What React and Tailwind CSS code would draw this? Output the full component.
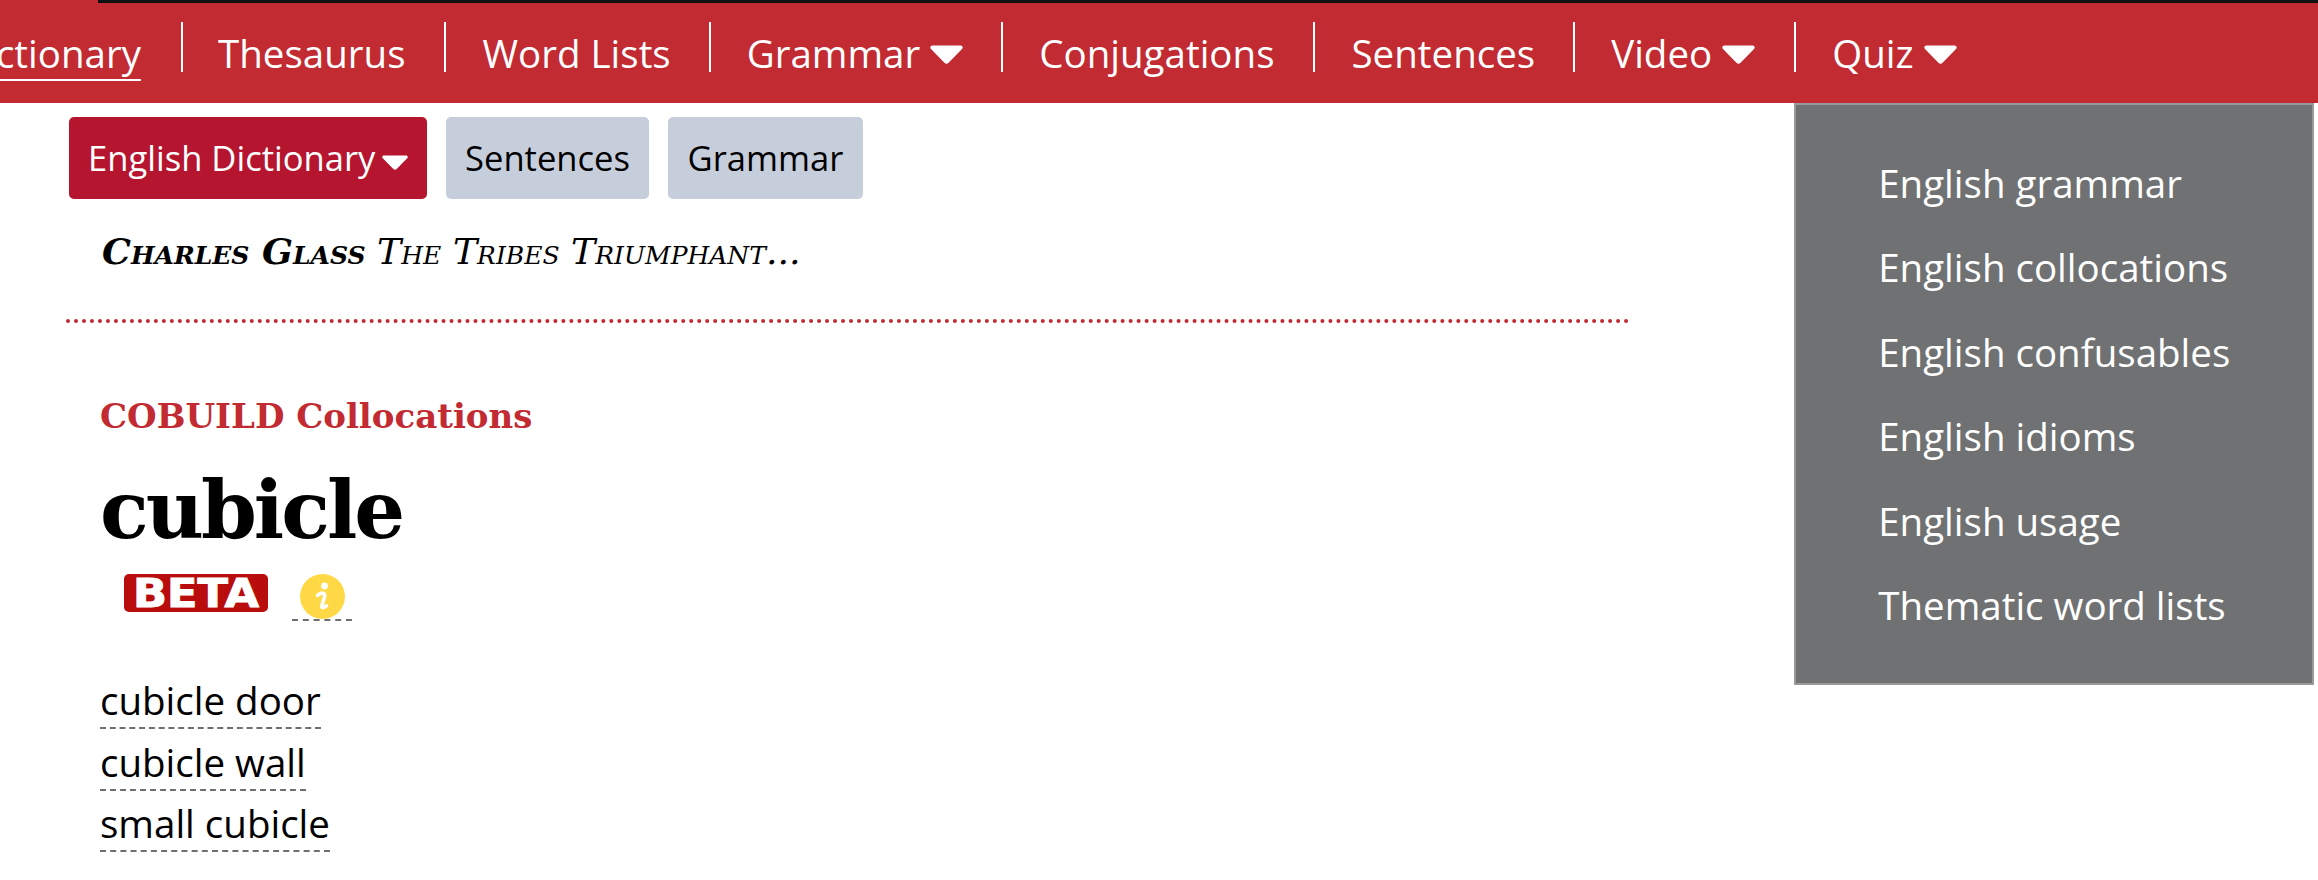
const sans = "font-['Open_Sans',sans-serif]";
const slab = "font-['DejaVu_Serif',serif]";

function Caret({ className }) {
  return (
    <svg viewBox="0 0 33 19" className={className} fill="currentColor">
      <path d="M2.5 0.5 H30.5 C32.5 0.5 33.4 2.4 32 4 L18.6 17.8 C17.4 19 15.6 19 14.4 17.8 L1 4 C-0.4 2.4 0.5 0.5 2.5 0.5 Z" />
    </svg>
  );
}

function NavItem({ label, caret, className = "pl-[36px] pr-[38px]", children }) {
  return (
    <div className={`relative h-[50px] border-l-2 border-white flex items-start ${className}`}>
      <a className="flex items-center gap-[10px] leading-[50px] mt-[6px] whitespace-nowrap">
        {label}
        {caret && <Caret className="w-[33px] h-[19px] mt-[3px] shrink-0" />}
      </a>
      {children}
    </div>
  );
}

function DashedLink({ children }) {
  return (
    <div className="h-[61.5px]">
      <a className="inline-block h-[58px] leading-[58px] border-b-2 border-dashed border-[#6f6f6f] text-black">
        {children}
      </a>
    </div>
  );
}

const menu = [
  "English grammar",
  "English collocations",
  "English confusables",
  "English idioms",
  "English usage",
  "Thematic word lists",
];

export default function App() {
  return (
    <div className={`w-[2318px] h-[880px] overflow-hidden bg-white text-[38.5px] ${sans}`}>
      <header className="relative bg-[#c22b32] h-[103px] text-white">
        <div className="h-[3px] ml-[98px] bg-[#111]" />
        <nav className="flex pt-[19px]">
          <div className="w-[181px] shrink-0 flex justify-end pr-[40px] whitespace-nowrap">
            <a className="h-[50px] leading-[50px] mt-[6px] underline decoration-2 underline-offset-[11px] [text-decoration-skip-ink:none]">
              English Dictionary
            </a>
          </div>
          <NavItem label="Thesaurus" className="pl-[35px] pr-[39px]" />
          <NavItem label="Word Lists" />
          <NavItem label="Grammar" caret />
          <NavItem label="Conjugations" className="pl-[36px] pr-[39px]" />
          <NavItem label="Sentences" />
          <NavItem label="Video" caret className="pl-[36px] pr-[39px]" />
          <NavItem label="Quiz" caret>
            <div className="absolute left-[-2px] top-[81px] w-[520px] h-[582px] border-2 border-[#9a9a9a] bg-[#707173] pl-[82px] pt-[35.5px] z-10">
              {menu.map((item) => (
                <div key={item} className="h-[84.5px] leading-[84.5px] whitespace-nowrap">
                  {item}
                </div>
              ))}
            </div>
          </NavItem>
        </nav>
      </header>

      <main className="pl-[66px] pt-[14px] w-[1630px]">
        <div className="flex gap-[19px] pl-[3px] text-[34.6px]">
          <button className="h-[82px] w-[358px] rounded-[5px] bg-[#b5152f] text-white flex items-center pl-[19px] gap-[7px] whitespace-nowrap">
            English Dictionary
            <Caret className="w-[26px] h-[15px] mt-[8px] shrink-0" />
          </button>
          <button className="h-[82px] w-[203px] rounded-[5px] bg-[#c7cedb] text-black">Sentences</button>
          <button className="h-[82px] w-[195px] rounded-[5px] bg-[#c7cedb] text-black">Grammar</button>
        </div>

        <div className={`pl-[36px] pt-[28px] h-[124px] border-b-4 border-dotted border-[#c22b32] text-[36.3px] italic leading-[50px] whitespace-nowrap text-black [font-variant-caps:small-caps] ${slab}`}>
          <b>Charles Glass</b> The Tribes Triumphant...
        </div>

        <section className="pl-[34px] pt-[70px]">
          <h2 className={`text-[34px] leading-[46px] font-bold text-[#c22b32] whitespace-nowrap ${slab}`}>
            COBUILD Collocations
          </h2>
          <h1 className={`text-[80px] leading-[90px] mt-[26px] font-bold tracking-[-3px] text-black ${slab}`}>
            cubicle
          </h1>
          <div className="flex items-start pl-[24px] mt-[19px]">
            <svg viewBox="0 0 144 38" className="w-[144px] h-[38px] overflow-visible">
              <rect width="144" height="38" rx="5" fill="#b90c0c" />
              <text
                x="9"
                y="33"
                textLength="126"
                lengthAdjust="spacingAndGlyphs"
                fill="#fff"
                stroke="#fff"
                strokeWidth="1"
                fontFamily="DejaVu Sans"
                fontWeight="bold"
                fontSize="39"
              >
                BETA
              </text>
            </svg>
            <div className="ml-[24px] w-[60px] h-[47px] border-b-2 border-dashed border-[#6f6f6f] flex justify-center">
              <svg viewBox="0 0 45 45" className="w-[45px] h-[45px]">
                <circle cx="22.5" cy="22.5" r="22.5" fill="#ffd945" />
                <circle cx="24.5" cy="12" r="3.4" fill="#fff" />
                <path
                  d="M17.5 21.5 C19.5 19.5 22 18.8 23.6 19.4 C25 20 24.9 21.6 24.4 23.4 L21.9 31.5 C21.3 33.6 22.8 34.6 26.5 31.8"
                  fill="none"
                  stroke="#fff"
                  strokeWidth="3.6"
                  strokeLinecap="round"
                />
              </svg>
            </div>
          </div>
          <div className="mt-[50px]">
            <DashedLink>cubicle door</DashedLink>
            <DashedLink>cubicle wall</DashedLink>
            <DashedLink>small cubicle</DashedLink>
          </div>
        </section>
      </main>
    </div>
  );
}
